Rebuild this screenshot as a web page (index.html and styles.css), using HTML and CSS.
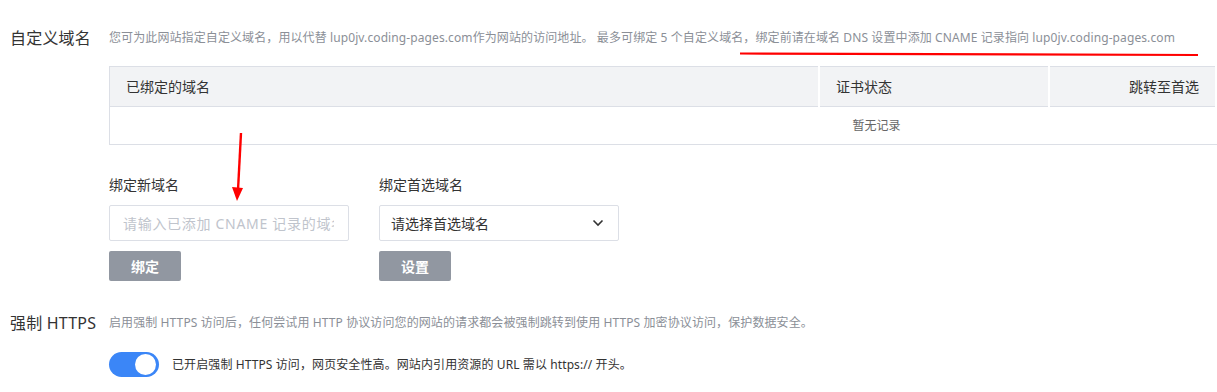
FILE: index.html
```html
<!DOCTYPE html>
<html lang="zh-CN">
<head>
  <meta charset="UTF-8">
  <meta name="viewport" content="width=device-width, initial-scale=1.0">
  <title>自定义域名</title>
  <link rel="stylesheet" href="styles.css">
</head>
<body>
  <div id="main">
    <div class="section">
      <div class="section-title">自定义域名</div>
      <div class="section-body">
        <div class="desc">您可为此网站指定自定义域名，用以代替 lup0jv.coding-pages.com作为网站的访问地址。 最多可绑定 5 个自定义域名，绑定前请在域名 DNS 设置中添加 CNAME 记录指向 lup0jv.coding-pages.com</div>

        <table class="domains">
          <thead>
            <tr>
              <th class="col-name">已绑定的域名</th>
              <th class="col-cert">证书状态</th>
              <th class="col-jump">跳转至首选</th>
              <th class="col-more"></th>
            </tr>
          </thead>
          <tbody>
            <tr>
              <td class="empty" colspan="4">暂无记录</td>
            </tr>
          </tbody>
        </table>

        <div class="forms">
          <div class="field">
            <label for="domain">绑定新域名</label>
            <input type="text" id="domain" placeholder="请输入已添加 CNAME 记录的域名">
            <button class="btn">绑定</button>
          </div>
          <div class="field">
            <label>绑定首选域名</label>
            <div class="select">
              <span>请选择首选域名</span>
              <svg width="12" height="8" viewBox="0 0 12 8"><path d="M1.5 1.5 6 6l4.5-4.5" fill="none" stroke="#333" stroke-width="1.6"/></svg>
            </div>
            <button class="btn">设置</button>
          </div>
        </div>
      </div>
    </div>

    <div class="section https">
      <div class="section-title">强制 HTTPS</div>
      <div class="section-body">
        <div class="desc">启用强制 HTTPS 访问后，任何尝试用 HTTP 协议访问您的网站的请求都会被强制跳转到使用 HTTPS 加密协议访问，保护数据安全。</div>
        <div class="switch-row">
          <span class="switch on"><span class="knob"></span></span>
          <span class="switch-text">已开启强制 HTTPS 访问，网页安全性高。网站内引用资源的 URL 需以 https:// 开头。</span>
        </div>
      </div>
    </div>
  </div>

  <!-- hand-drawn annotations over the screenshot -->
  <svg class="marks" width="1217" height="392" viewBox="0 0 1217 392">
    <path d="M740 53.5 Q970 54 1198 55" fill="none" stroke="#f00" stroke-width="2.2"/>
    <path d="M241 133 L238 190" fill="none" stroke="#f00" stroke-width="2.4"/>
    <path d="M232 187 L243 188 L237 201 Z" fill="#f00"/>
  </svg>
</body>
</html>
```

FILE: styles.css
```css
html, body {
  margin: 0;
  overflow: hidden;
}

body {
  font-family: "Noto Sans", "Noto Sans CJK SC", sans-serif;
  color: #333;
  background: #fff;
  position: relative;
  width: 1217px;
  height: 392px;
}

#main {
  padding: 28px 0 0 10px;
  width: 1700px;
}

.section {
  display: grid;
  grid-template-columns: 99px 1fr;
}

.section-title {
  font-size: 16px;
  line-height: 20px;
  color: #333;
  white-space: nowrap;
  letter-spacing: 0.2px;
}

.desc {
  font-size: 12px;
  line-height: 20px;
  color: #8b8f97;
  white-space: nowrap;
  letter-spacing: 0.1px;
}

.domains {
  margin-top: 18px;
  border-collapse: collapse;
  table-layout: fixed;
  width: 1534px;
  font-size: 14px;
  line-height: 20px;
}

.domains th {
  height: 39px;
  padding: 0 16px;
  background: #f2f3f5;
  font-weight: normal;
  text-align: left;
  color: #333;
  border-top: 1px solid #dcdfe6;
  border-bottom: 1px solid #dcdfe6;
  border-left: 2px solid #fff;
}
.domains th:first-child {
  border-left: 1px solid #dcdfe6;
}
.domains .col-name { width: 676px; }
.domains .col-cert { width: 196px; }
.domains .col-jump { width: 133px; text-align: right; }

.domains td.empty {
  height: 35px;
  text-align: center;
  font-size: 12px;
  color: #666;
  border-left: 1px solid #dcdfe6;
  border-bottom: 1px solid #dcdfe6;
}

.forms {
  display: flex;
  gap: 30px;
  margin-top: 30px;
}

.field {
  display: flex;
  flex-direction: column;
  align-items: flex-start;
  width: 240px;
}

.field label {
  font-size: 14px;
  line-height: 20px;
  margin-bottom: 10px;
}

.field input,
.select {
  box-sizing: border-box;
  width: 240px;
  height: 36px;
  border: 1px solid #dcdfe6;
  border-radius: 2px;
  font: inherit;
  font-size: 14px;
  padding: 0 14px 0 13px;
  color: #333;
}
.field input::placeholder {
  color: #c0c4cc;
  letter-spacing: 0.7px;
}

.select {
  display: flex;
  align-items: center;
  justify-content: space-between;
  padding: 0 14px 0 11px;
}

.btn {
  margin-top: 10px;
  width: 72px;
  height: 30px;
  border: 0;
  border-radius: 2px;
  background: #9197a1;
  color: #fff;
  font: inherit;
  font-size: 14px;
  font-weight: bold;
}

.https {
  margin-top: 32px;
}

.switch-row {
  display: flex;
  align-items: center;
  gap: 13px;
  margin-top: 19px;
}

.switch {
  display: flex;
  justify-content: flex-end;
  align-items: center;
  box-sizing: border-box;
  width: 50px;
  height: 25px;
  padding: 0 3px;
  border-radius: 13px;
  background: #3b86f7;
}
.knob {
  width: 21px;
  height: 21px;
  border-radius: 50%;
  background: #fff;
}

.switch-text {
  font-size: 12px;
  line-height: 20px;
  color: #333;
  letter-spacing: 0.1px;
}

.marks {
  position: absolute;
  left: 0;
  top: 0;
  pointer-events: none;
}
```
